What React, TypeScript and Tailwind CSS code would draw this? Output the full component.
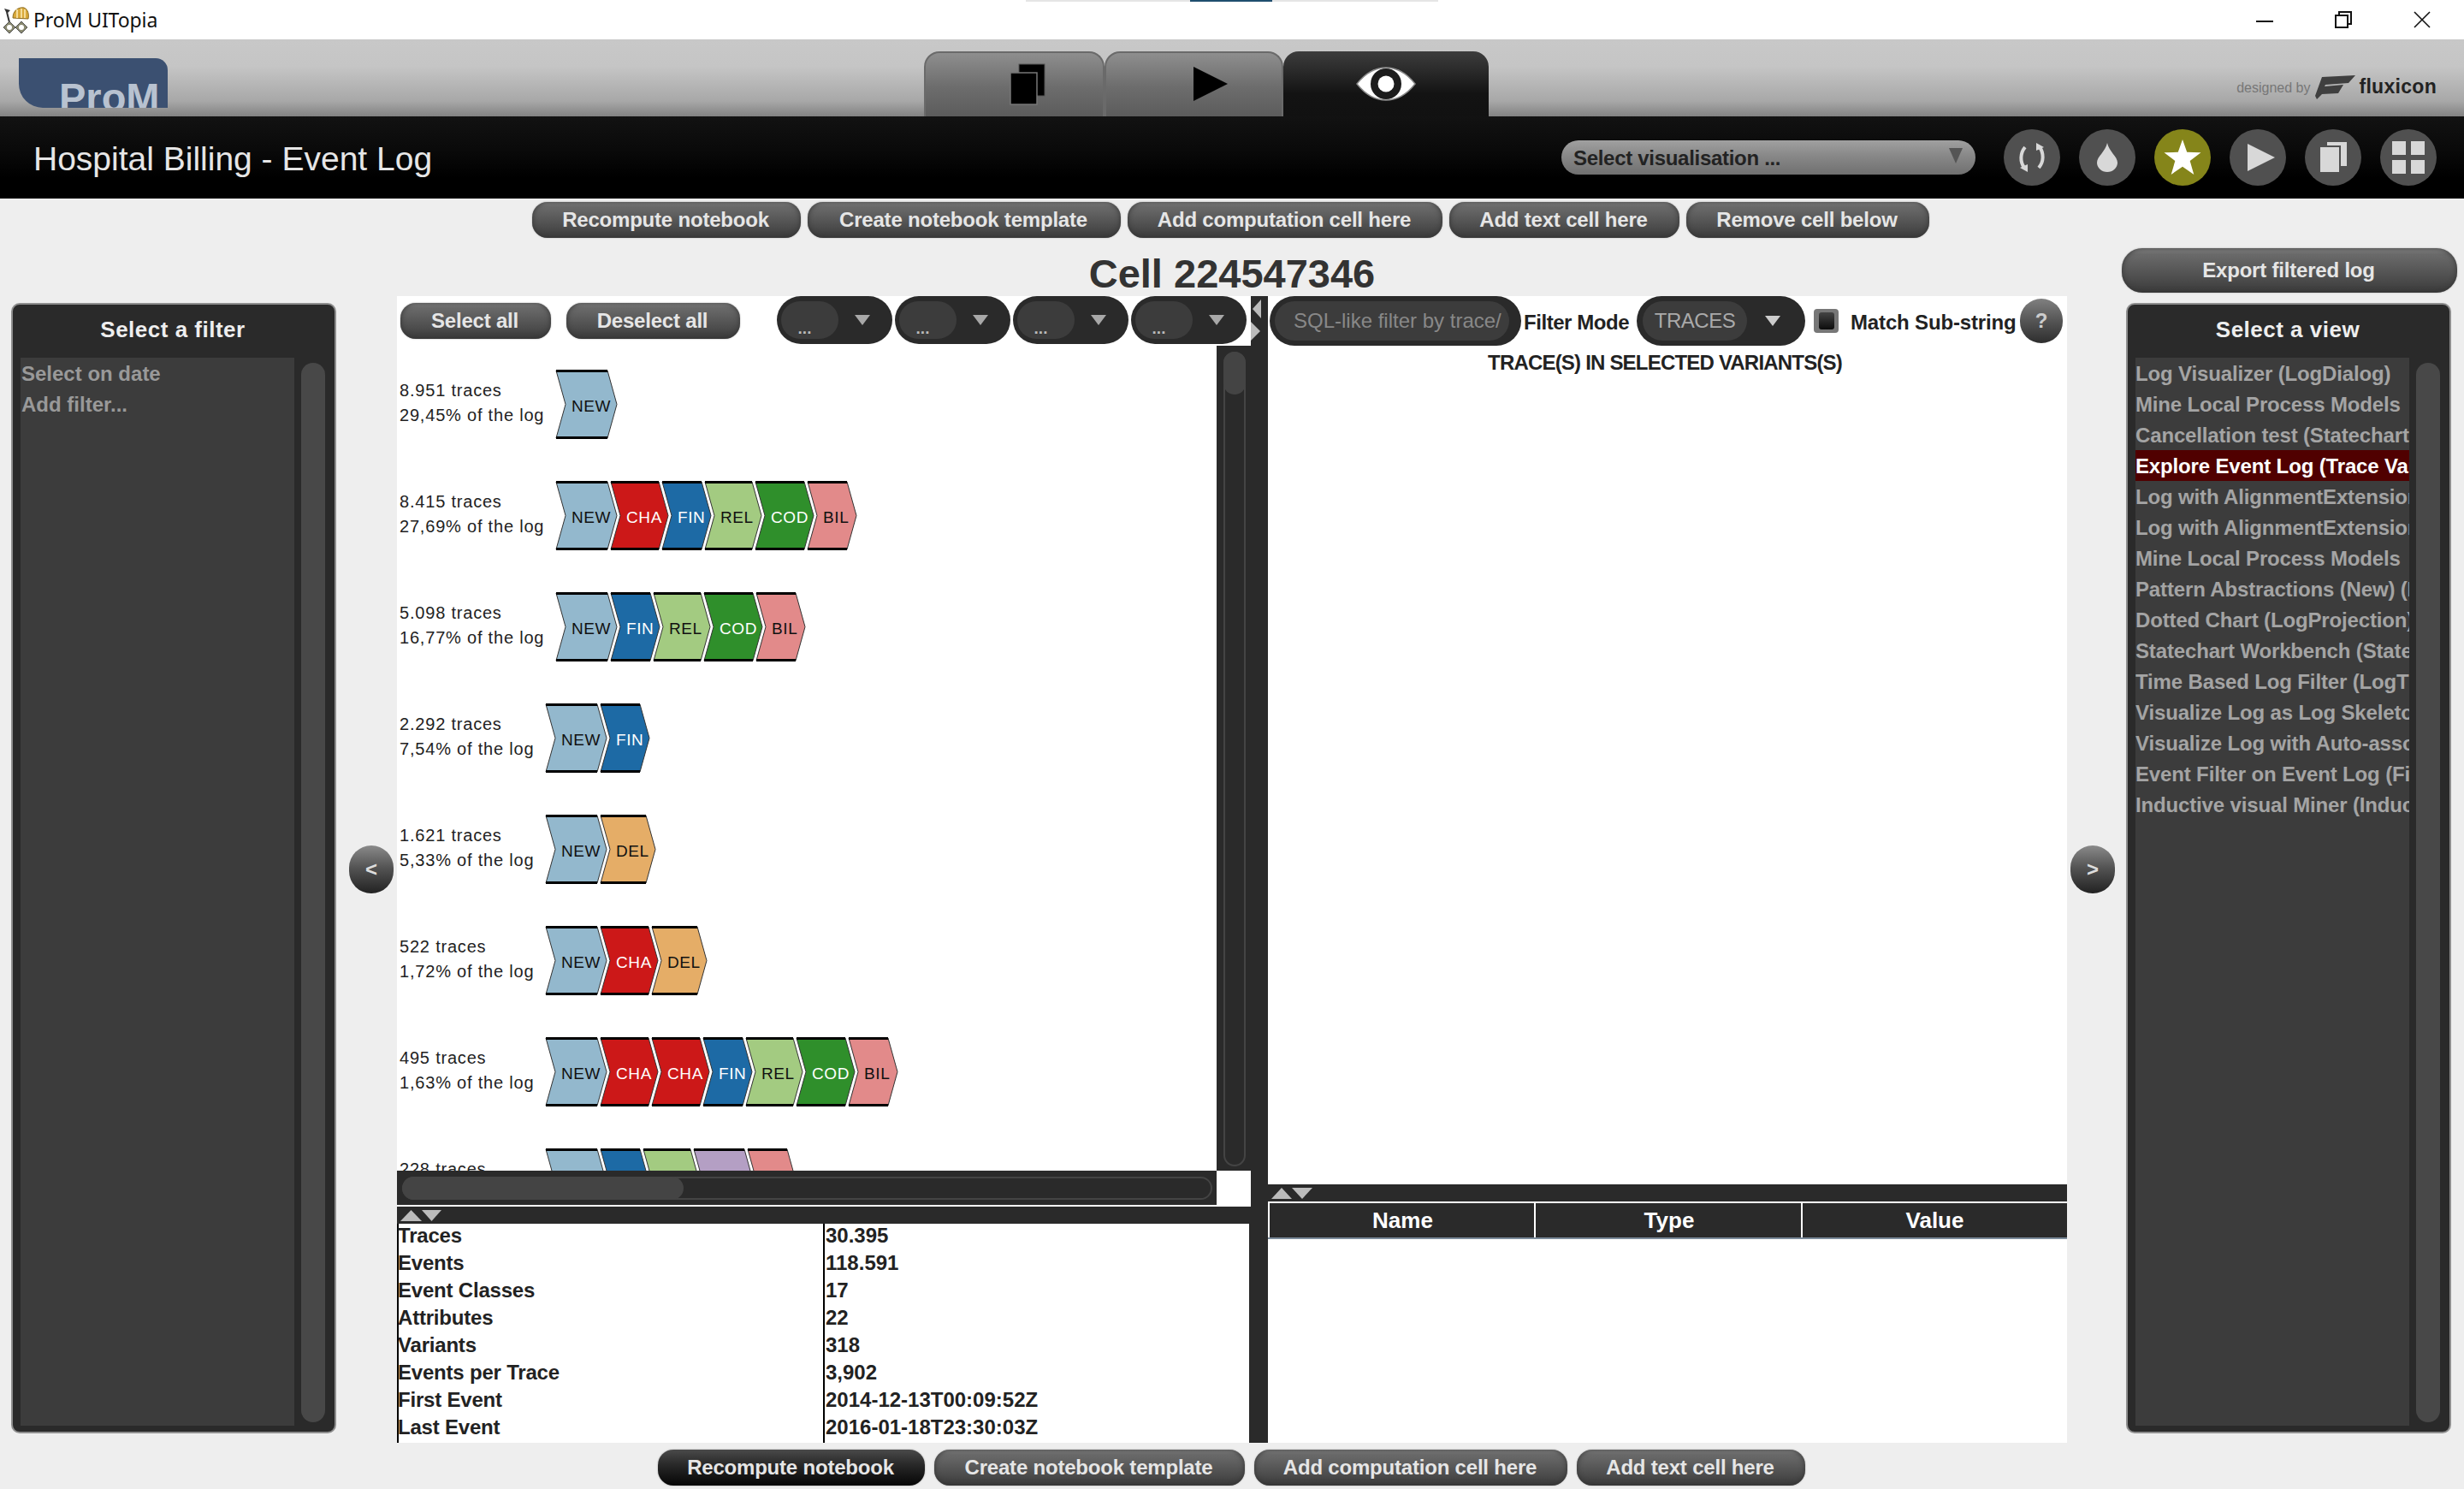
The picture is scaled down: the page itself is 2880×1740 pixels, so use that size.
import React from "react";

const CW: Record<string, { w: number; fill: string; ink: string }> = {
  NEW: { w: 60, fill: "#93b8cd", ink: "#111" },
  CHA: { w: 56, fill: "#cc1818", ink: "#fff" },
  FIN: { w: 46, fill: "#1d6aa5", ink: "#fff" },
  REL: { w: 55, fill: "#a3cb81", ink: "#111" },
  COD: { w: 57, fill: "#2f8f2b", ink: "#fff" },
  BIL: { w: 46, fill: "#e28a8a", ink: "#111" },
  DEL: { w: 53, fill: "#e5ad67", ink: "#111" },
  PUR: { w: 59, fill: "#b49fc4", ink: "#111" },
};

function Chevron({ k }: { k: string }) {
  const { w, fill, ink } = CW[k];
  return (
    <svg width={w + 11} height={81} className="mr-[-7px] shrink-0 overflow-visible">
      <path d={`M0 1 H${w} L${w + 11} 40.5 L${w} 80 H0 L11 40.5 Z`} fill={fill} stroke="#333" strokeWidth="1" />
      <path d={`M0 1.5 H${w} M0 79.5 H${w}`} stroke="#000" strokeWidth="3" />
      {k !== "PUR" && (
        <text x={18} y={49} fontSize={19} letterSpacing={0.6} fill={ink} fontFamily="Liberation Sans">
          {k}
        </text>
      )}
    </svg>
  );
}

const rows = [
  { a: "8.951 traces", b: "29,45% of the log", pad: "w-[186px]", c: ["NEW"] },
  { a: "8.415 traces", b: "27,69% of the log", pad: "w-[186px]", c: ["NEW", "CHA", "FIN", "REL", "COD", "BIL"] },
  { a: "5.098 traces", b: "16,77% of the log", pad: "w-[186px]", c: ["NEW", "FIN", "REL", "COD", "BIL"] },
  { a: "2.292 traces", b: "7,54% of the log", pad: "w-[174px]", c: ["NEW", "FIN"] },
  { a: "1.621 traces", b: "5,33% of the log", pad: "w-[174px]", c: ["NEW", "DEL"] },
  { a: "522 traces", b: "1,72% of the log", pad: "w-[174px]", c: ["NEW", "CHA", "DEL"] },
  { a: "495 traces", b: "1,63% of the log", pad: "w-[174px]", c: ["NEW", "CHA", "CHA", "FIN", "REL", "COD", "BIL"] },
  { a: "228 traces", b: "0,75% of the log", pad: "w-[174px]", c: ["NEW", "FIN", "REL", "PUR", "BIL"] },
];

const stats = [
  ["Traces", "30.395"],
  ["Events", "118.591"],
  ["Event Classes", "17"],
  ["Attributes", "22"],
  ["Variants", "318"],
  ["Events per Trace", "3,902"],
  ["First Event", "2014-12-13T00:09:52Z"],
  ["Last Event", "2016-01-18T23:30:03Z"],
];

const views = [
  "Log Visualizer (LogDialog)",
  "Mine Local Process Models",
  "Cancellation test (Statechart Workbench)",
  "Explore Event Log (Trace Variants)",
  "Log with AlignmentExtension (A)",
  "Log with AlignmentExtension (B)",
  "Mine Local Process Models",
  "Pattern Abstractions (New) (Log)",
  "Dotted Chart (LogProjection)",
  "Statechart Workbench (Statechart)",
  "Time Based Log Filter (LogTime)",
  "Visualize Log as Log Skeleton",
  "Visualize Log with Auto-associations",
  "Event Filter on Event Log (Filter)",
  "Inductive visual Miner (Inductive)",
];

function Btn({ label, cls, dark }: { label: string; cls: string; dark?: boolean }) {
  return (
    <div
      className={
        "flex h-[42px] shrink-0 items-center justify-center rounded-[18px] pr-[2px] text-[24px] leading-none font-bold tracking-[-0.2px] whitespace-nowrap text-[#e6e6e6] " +
        (dark
          ? "bg-[linear-gradient(180deg,#4a4a4a_0%,#2a2a2a_40%,#050505_100%)] shadow-[0_0_2px_#999] "
          : "bg-[linear-gradient(180deg,#888888_0%,#6a6a6a_14%,#4c4c4c_70%,#3a3a3a_100%)] shadow-[0_0_2px_#aaa,inset_0_0_6px_#333] ") +
        cls
      }
    >
      {label}
    </div>
  );
}

function Tri({ w, h, fill, down }: { w: number; h: number; fill: string; down?: boolean }) {
  return (
    <svg width={w} height={h} className="shrink-0">
      <polygon points={down ? `0,0 ${w},0 ${w / 2},${h}` : `0,${h} ${w},${h} ${w / 2},0`} fill={fill} />
    </svg>
  );
}

function Dots() {
  return (
    <div className="flex h-[56px] w-[135px] shrink-0 items-center rounded-[28px] bg-[#2a2a2a] pl-[5px]">
      <div className="flex h-[44px] w-[67px] items-end justify-center rounded-[22px] bg-[#3c3c3c] pr-[12px] pb-[2px] text-[19px] leading-[20px] font-bold text-[#bbbbbb]">
        ...
      </div>
      <div className="ml-[19px] flex">
        <Tri w={18} h={12} fill="#a8a8a8" down />
      </div>
    </div>
  );
}

function PanelList({ title, children }: { title: string; children: React.ReactNode }) {
  return (
    <div className="flex h-[1321px] w-[380px] shrink-0 flex-col rounded-[10px] border-2 border-[#8e8e8e] bg-[#2a2a2a]">
      <div className="flex h-[62px] shrink-0 items-center justify-center pr-[2px] pb-[5px] text-[26px] leading-none font-bold tracking-[0.5px] text-[#eeeeee]">
        {title}
      </div>
      <div className="flex h-[1248px] pl-[9px]">
        <div className="h-full w-[320px] overflow-hidden bg-[#3c3c3c]">{children}</div>
        <div className="mt-[6px] ml-[8px] h-[1238px] w-[28px] rounded-full bg-[#484848]" />
      </div>
    </div>
  );
}

function Round({ olive, children }: { olive?: boolean; children: React.ReactNode }) {
  return (
    <div className={"flex h-[66px] w-[66px] shrink-0 items-center justify-center rounded-full " + (olive ? "bg-[#85851a]" : "bg-[#505050]")}>
      {children}
    </div>
  );
}

function Nav({ label, cls }: { label: string; cls: string }) {
  return (
    <div
      className={
        "flex h-[56px] w-[52px] shrink-0 items-center justify-center rounded-full bg-[linear-gradient(180deg,#8a8a8a_0%,#555555_45%,#222222_100%)] text-[24px] leading-none font-bold text-[#dddddd] " +
        cls
      }
    >
      {label}
    </div>
  );
}

export default function App() {
  return (
    <div className="relative flex h-[1740px] w-[2880px] flex-col overflow-hidden bg-[#eeeeee] font-['Liberation_Sans',Arial,sans-serif] text-[#222222]">
      {/* title bar */}
      <div className="flex h-[46px] shrink-0 items-center bg-white pr-[39px] pl-[2px]">
        <svg width="32" height="32" viewBox="0 0 32 32" className="shrink-0">
          <path d="M13 14 C13 5 20 1 26 2 C31 4 32 10 31 15 Z" fill="#d9a93a" stroke="#8a6a20" strokeWidth="1" />
          <path d="M18 4 V14 M23 3 V14 M27 4 V14" stroke="#f4dc9a" strokeWidth="2" />
          <path d="M3 3 L10 5 L7 8 L5 7 Z" fill="#333" />
          <path d="M6 7 L9 19" stroke="#333" strokeWidth="2" />
          <path d="M2 25 L9 18 L16 25 L9 32 Z M16 25 L23 18 L30 25 L23 32 Z" fill="#8a8a70" stroke="#555" strokeWidth="1" />
          <circle cx="9" cy="25" r="3" fill="#fff" />
          <circle cx="23" cy="25" r="3" fill="#fff" />
        </svg>
        <div className="ml-[5px] font-['Noto_Sans',sans-serif] text-[23px] leading-none tracking-[-0.1px] text-[#111111]">ProM UITopia</div>
        <div className="ml-auto flex items-center gap-[72px]">
          <svg width="20" height="20" viewBox="0 0 20 20">
            <path d="M0 12 H20" stroke="#111" strokeWidth="2" />
          </svg>
          <svg width="20" height="20" viewBox="0 0 20 20" fill="none" stroke="#111" strokeWidth="2">
            <rect x="1" y="5" width="14" height="14" />
            <path d="M5 5 V1 H19 V15 H15" />
          </svg>
          <svg width="20" height="20" viewBox="0 0 20 20" fill="none" stroke="#111" strokeWidth="1.6">
            <path d="M1 1 L19 19 M19 1 L1 19" />
          </svg>
        </div>
      </div>
      <div className="absolute top-0 left-[1199px] flex h-[2px] w-[482px] bg-[#e5e5e5] pl-[192px]">
        <div className="h-full w-[96px] bg-[#1f4e6e]" />
      </div>

      {/* toolbar */}
      <div className="flex h-[90px] shrink-0 items-end bg-[linear-gradient(180deg,#c8c8c8_0%,#c5c5c5_35%,#a8a8a8_80%,#828282_100%)]">
        <div className="mb-[10px] ml-[22px] h-[58px] w-[174px] shrink-0 overflow-hidden rounded-tr-[14px] rounded-bl-[28px] bg-[#3b5071]">
          <div className="mt-[22px] ml-[47px] text-[47px] leading-none font-bold text-[#b8c2d0]">ProM</div>
        </div>
        <div className="ml-[884px] flex h-[76px] w-[211px] shrink-0 items-start justify-center rounded-t-[18px] border-x-2 border-t-2 border-[#6a6a6a] bg-[linear-gradient(180deg,#8e8e8e_0%,#6c6c6c_55%,#5c5c5c_100%)] pt-[12px]">
          <svg width="42" height="50" viewBox="0 0 42 50" className="ml-[30px]">
            <rect x="11" y="1" width="30" height="37" fill="#000" stroke="#555" strokeWidth="1" />
            <rect x="1" y="11" width="31" height="37" fill="#000" stroke="#777" strokeWidth="1.5" />
          </svg>
        </div>
        <div className="flex h-[76px] w-[209px] shrink-0 items-start justify-center rounded-t-[18px] border-x-2 border-t-2 border-[#6a6a6a] bg-[linear-gradient(180deg,#8e8e8e_0%,#6c6c6c_55%,#5c5c5c_100%)] pt-[16px]">
          <svg width="40" height="40" viewBox="0 0 40 40" className="ml-[38px]">
            <polygon points="0,0 40,20 0,40" fill="#000" />
          </svg>
        </div>
        <div className="flex h-[76px] w-[240px] shrink-0 items-start justify-center rounded-t-[18px] bg-[linear-gradient(180deg,#3c3c3c_0%,#2a2a2a_30%,#131313_65%,#111111_100%)] pt-[18px]">
          <svg width="70" height="40" viewBox="0 0 70 40">
            <path d="M1 20 C12 6 23 1 35 1 C47 1 58 6 69 20 C58 34 47 39 35 39 C23 39 12 34 1 20 Z" fill="#fff" stroke="#888" strokeWidth="1.5" />
            <circle cx="35" cy="20" r="18" fill="#1c1c1c" />
            <circle cx="35" cy="20" r="9.5" fill="#fff" />
          </svg>
        </div>
        <div className="mb-[18px] ml-auto flex items-center pr-[32px]">
          <div className="text-[16px] leading-none text-[#777777]">designed by</div>
          <svg width="47" height="31" viewBox="0 0 47 31" className="mr-[4px] ml-[6px]">
            <path d="M8 3 L47 1 L39 10 L12 12 L11 14 L33 12 L27 22 L8 23 L2 29 L0 25 Z" fill="#3f3f3f" />
          </svg>
          <div className="mt-[-2px] text-[23px] leading-none font-bold tracking-[0.3px] text-[#222222]">fluxicon</div>
        </div>
      </div>

      {/* black bar */}
      <div className="flex h-[96px] shrink-0 items-center bg-[linear-gradient(180deg,#121212_0%,#0a0a0a_40%,#000000_75%)] pr-[32px] pl-[39px]">
        <div className="pt-[2px] text-[39px] leading-none text-[#e6e6e6]">Hospital Billing - Event Log</div>
        <div className="ml-auto flex h-[40px] w-[484px] shrink-0 items-center rounded-[20px] bg-[linear-gradient(180deg,#a0a0a0_0%,#888888_45%,#707070_100%)] pr-[15px] pl-[14px] text-[24px] leading-none font-bold tracking-[-0.3px] text-[#222222]">
          <div className="mt-[2px]">Select visualisation ...</div>
          <div className="mt-[-4px] ml-auto flex">
            <Tri w={16} h={18} fill="#555555" down />
          </div>
        </div>
        <div className="ml-[33px] flex gap-[22px]">
          <Round>
            <svg width="36" height="36" viewBox="0 0 36 36" fill="none" stroke="#d8d8d8" strokeWidth="4">
              <path d="M10 6 C4 13 4 23 9 30" />
              <path d="M26 30 C32 23 32 13 27 6" />
              <polygon points="4,30 13,26 13,35" fill="#d8d8d8" stroke="none" />
              <polygon points="32,6 23,10 23,1" fill="#d8d8d8" stroke="none" />
            </svg>
          </Round>
          <Round>
            <svg width="24" height="34" viewBox="0 0 24 34">
              <path d="M12 0 C14 10 24 16 24 23 A12 11 0 0 1 0 23 C0 16 10 10 12 0 Z" fill="#d8d8d8" />
            </svg>
          </Round>
          <Round olive>
            <svg width="44" height="42" viewBox="0 0 43 41">
              <polygon points="21.5,0 26.6,14.5 42.5,15 30,24.5 34.5,40 21.5,31 8.5,40 13,24.5 0.5,15 16.4,14.5" fill="#ffffff" />
            </svg>
          </Round>
          <Round>
            <svg width="32" height="32" viewBox="0 0 32 32" className="ml-[8px]">
              <polygon points="0,0 32,16 0,32" fill="#d8d8d8" />
            </svg>
          </Round>
          <Round>
            <svg width="32" height="36" viewBox="0 0 32 36">
              <rect x="9" y="0" width="23" height="28" fill="#d8d8d8" />
              <rect x="0" y="5" width="24" height="31" fill="#d8d8d8" stroke="#505050" strokeWidth="2" />
            </svg>
          </Round>
          <Round>
            <svg width="38" height="38" viewBox="0 0 38 38">
              <rect x="0" y="0" width="16" height="16" fill="#d8d8d8" />
              <rect x="22" y="0" width="16" height="16" fill="#d8d8d8" />
              <rect x="0" y="22" width="16" height="16" fill="#d8d8d8" />
              <rect x="22" y="22" width="16" height="16" fill="#d8d8d8" />
            </svg>
          </Round>
        </div>
      </div>

      {/* top buttons */}
      <div className="mt-[4px] flex shrink-0 gap-[8px] pl-[622px]">
        <Btn label="Recompute notebook" cls="w-[314px]" />
        <Btn label="Create notebook template" cls="w-[366px]" />
        <Btn label="Add computation cell here" cls="w-[368px]" />
        <Btn label="Add text cell here" cls="w-[269px]" />
        <Btn label="Remove cell below" cls="w-[284px]" />
      </div>

      {/* main */}
      <div className="mt-[12px] flex h-[1396px] shrink-0 pl-[13px]">
        <div className="mt-[64px]">
          <PanelList title="Select a filter">
            <div className="pl-[1px] text-[24px] font-bold text-[#999999]">
              <div className="h-[36px] leading-[38px]">Select on date</div>
              <div className="h-[36px] leading-[38px]">Add filter...</div>
            </div>
          </PanelList>
        </div>
        <Nav label="<" cls="mt-[698px] ml-[15px]" />

        <div className="ml-[4px] flex w-[1952px] shrink-0 flex-col">
          <div className="flex h-[56px] shrink-0 items-center justify-center pt-[3px] text-[47px] leading-none font-bold text-[#333333]">
            Cell 224547346
          </div>
          <div className="flex h-[1340px] bg-white">
            {/* left pane */}
            <div className="flex w-[998px] shrink-0 flex-col">
              <div className="flex h-[58px] shrink-0 items-start">
                <Btn label="Select all" cls="mt-[8px] ml-[4px] w-[176px]" />
                <Btn label="Deselect all" cls="mt-[8px] ml-[18px] w-[203px]" />
                <div className="ml-[43px] flex gap-[3px]">
                  <Dots />
                  <Dots />
                  <Dots />
                  <Dots />
                </div>
              </div>
              <div className="flex h-[964px] shrink-0">
                <div className="w-[958px] overflow-hidden pt-[28px]">
                  {rows.map((r, i) => (
                    <div key={i} className="flex h-[130px] items-start">
                      <div className={"shrink-0 pt-[10px] pl-[3px] text-[20px] leading-[29px] tracking-[0.8px] whitespace-nowrap text-[#222222] " + r.pad}>
                        <div>{r.a}</div>
                        <div>{r.b}</div>
                      </div>
                      <div className="flex">
                        {r.c.map((k, j) => (
                          <Chevron key={j} k={k} />
                        ))}
                      </div>
                    </div>
                  ))}
                </div>
                <div className="h-full w-[40px] shrink-0 bg-[#2a2a2a] pt-[7px] pl-[8px]">
                  <div className="relative h-[952px] w-[26px] rounded-full border-2 border-[#444444]">
                    <div className="absolute top-[-2px] left-[-2px] h-[50px] w-[26px] rounded-full bg-[#444444]" />
                  </div>
                </div>
              </div>
              <div className="flex h-[40px] w-[958px] shrink-0 items-center bg-[#2a2a2a] pr-[5px] pl-[6px]">
                <div className="h-[27px] w-full rounded-full border-2 border-[#444444]">
                  <div className="mt-[-2px] ml-[-2px] h-[27px] w-[329px] rounded-full bg-[#444444]" />
                </div>
              </div>
              <div className="h-[2px] shrink-0" />
              <div className="flex h-[20px] shrink-0 items-center gap-[0px] bg-[#2a2a2a] pl-[4px]">
                <Tri w={25} h={13} fill="#bbbbbb" />
                <Tri w={23} h={13} fill="#bbbbbb" down />
              </div>
              <div className="h-[256px] shrink-0 border-r-2 border-l-2 border-r-[#2a2a2a] border-l-black text-[24px] leading-[28px] font-bold text-[#222222]">
                {stats.map(([k, v]) => (
                  <div key={k} className="flex h-[32px]">
                    <div className="w-[498px] shrink-0 border-r-2 border-black tracking-[-0.2px] whitespace-nowrap">
                      <div className="ml-[-1px]">{k}</div>
                    </div>
                    <div className="pl-[1px] whitespace-nowrap">{v}</div>
                  </div>
                ))}
              </div>
            </div>

            {/* divider */}
            <div className="flex w-[20px] shrink-0 flex-col items-center bg-[#2a2a2a] pt-[4px]">
              <svg width="20" height="48" viewBox="0 0 20 48">
                <polygon points="12,0 12,22 2,11" fill="#bbbbbb" />
                <polygon points="0,26 0,48 11,37" fill="#bbbbbb" />
              </svg>
            </div>

            {/* right pane */}
            <div className="flex w-[934px] shrink-0 flex-col">
              <div className="flex h-[58px] shrink-0 items-center">
                <div className="ml-[2px] flex h-[58px] w-[294px] shrink-0 items-center rounded-[29px] bg-[#2a2a2a] pl-[6px]">
                  <div className="flex h-[46px] w-[274px] items-center overflow-hidden rounded-[23px] bg-[#3c3c3c] pl-[22px] text-[24px] leading-none whitespace-nowrap text-[#888888]">
                    SQL-like filter by trace/
                  </div>
                </div>
                <div className="ml-[3px] w-[123px] shrink-0 pt-[4px] text-[24px] leading-none font-bold tracking-[-0.45px] whitespace-nowrap text-[#222222]">Filter Mode</div>
                <div className="ml-[9px] flex h-[58px] w-[197px] shrink-0 items-center rounded-[29px] bg-[#2a2a2a] pl-[7px]">
                  <div className="flex h-[46px] w-[122px] items-center justify-center rounded-[23px] bg-[#3c3c3c] text-[24px] leading-none tracking-[-0.5px] text-[#aaaaaa]">TRACES</div>
                  <div className="ml-[21px] flex">
                    <Tri w={18} h={12} fill="#cccccc" down />
                  </div>
                </div>
                <div className="ml-[10px] flex h-[28px] w-[29px] shrink-0 items-center justify-center rounded-[4px] bg-[#777777]">
                  <div className="h-[20px] w-[18px] rounded-[3px] bg-[linear-gradient(180deg,#444444,#0c0c0c)]" />
                </div>
                <div className="ml-[14px] w-[194px] shrink-0 pt-[4px] text-[24px] leading-none font-bold tracking-[-0.15px] whitespace-nowrap text-[#222222]">Match Sub-string</div>
                <div className="ml-[4px] flex h-[52px] w-[50px] shrink-0 items-center justify-center rounded-full bg-[linear-gradient(180deg,#808080_0%,#555555_50%,#2e2e2e_100%)] text-[24px] leading-none font-bold text-[#cccccc]">?</div>
              </div>
              <div className="h-[980px] shrink-0 pt-[6px] pr-[6px] text-center text-[24px] leading-[28px] font-bold tracking-[-0.8px] whitespace-nowrap text-[#222222]">
                TRACE(S) IN SELECTED VARIANTS(S)
              </div>
              <div className="flex h-[20px] shrink-0 items-center bg-[#2a2a2a] pl-[4px]">
                <Tri w={24} h={13} fill="#bbbbbb" />
                <Tri w={24} h={13} fill="#bbbbbb" down />
              </div>
              <div className="h-[2px] shrink-0" />
              <div className="flex h-[42px] shrink-0 border-b-[2px] border-b-[#7a8a9a] text-[26px] leading-none font-bold text-white">
                <div className="flex w-[313px] items-center justify-center border-x-2 border-white bg-[#2a2a2a] pb-[1px] pl-[2px]">Name</div>
                <div className="flex w-[312px] items-center justify-center border-r-2 border-white bg-[#2a2a2a] pb-[1px] pl-[2px]">Type</div>
                <div className="flex flex-1 items-center justify-center bg-[#2a2a2a] pb-[1px]">Value</div>
              </div>
            </div>
          </div>
        </div>

        <Nav label=">" cls="mt-[698px] ml-[4px]" />

        <div className="ml-[8px] flex w-[392px] shrink-0 flex-col">
          <Btn label="Export filtered log" cls="h-[52px] w-[392px] rounded-[24px]" />
          <div className="mt-[12px] pl-[5px]">
            <PanelList title="Select a view">
              <div className="text-[24px] font-bold tracking-[-0.15px] text-[#a4a4a4]">
                {views.map((v, i) => (
                  <div key={i} className={"h-[36px] overflow-hidden leading-[38px] whitespace-nowrap " + (i === 3 ? "bg-[#500000] text-white" : "")}>
                    {v}
                  </div>
                ))}
              </div>
            </PanelList>
          </div>
        </div>
      </div>

      {/* bottom buttons */}
      <div className="mt-[8px] flex shrink-0 gap-[11px] pl-[769px]">
        <Btn label="Recompute notebook" cls="w-[312px]" dark />
        <Btn label="Create notebook template" cls="w-[363px]" />
        <Btn label="Add computation cell here" cls="w-[366px]" />
        <Btn label="Add text cell here" cls="w-[267px]" />
      </div>
    </div>
  );
}
